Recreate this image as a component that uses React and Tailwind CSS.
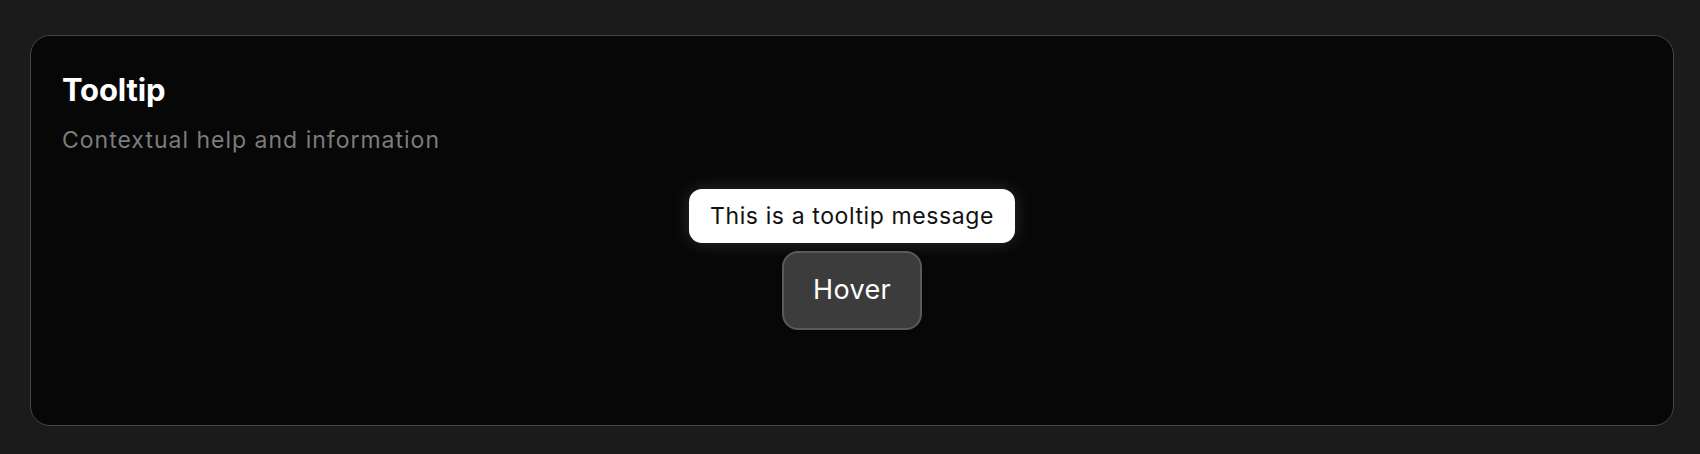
import React from "react";

function TooltipDemo() {
  return (
    <div className="flex flex-col items-center">
      <div className="h-[54px] px-[21px] flex items-center rounded-[13px] bg-white text-[#111111] text-[23px] tracking-[0.6px] shadow-[0_0_18px_rgba(255,255,255,0.16)]">
        This is a tooltip message
      </div>
      <button className="mt-[8px] w-[140px] h-[79px] rounded-[16px] bg-[#3c3c3c] border-2 border-[#5a5a5a] text-white text-[27px] tracking-[0.3px]">
        Hover
      </button>
    </div>
  );
}

export default function App() {
  return (
    <div
      className="min-h-[454px] w-full bg-[#1b1b1b] pt-[35px] pl-[30px] pr-[26px]"
      style={{ fontFamily: "Inter, 'Noto Sans', sans-serif" }}
    >
      <div className="h-[391px] rounded-[20px] border-[1.5px] border-[#454545] bg-[#070707] px-[31px] pt-[36px]">
        <h2 className="text-[31px] leading-[36px] font-bold tracking-[-0.005em] text-white">Tooltip</h2>
        <p className="mt-[18px] text-[23px] leading-[28px] tracking-[1px] text-[#7c7c7c]">Contextual help and information</p>
        <div className="mt-[35px]">
          <TooltipDemo />
        </div>
      </div>
    </div>
  );
}
